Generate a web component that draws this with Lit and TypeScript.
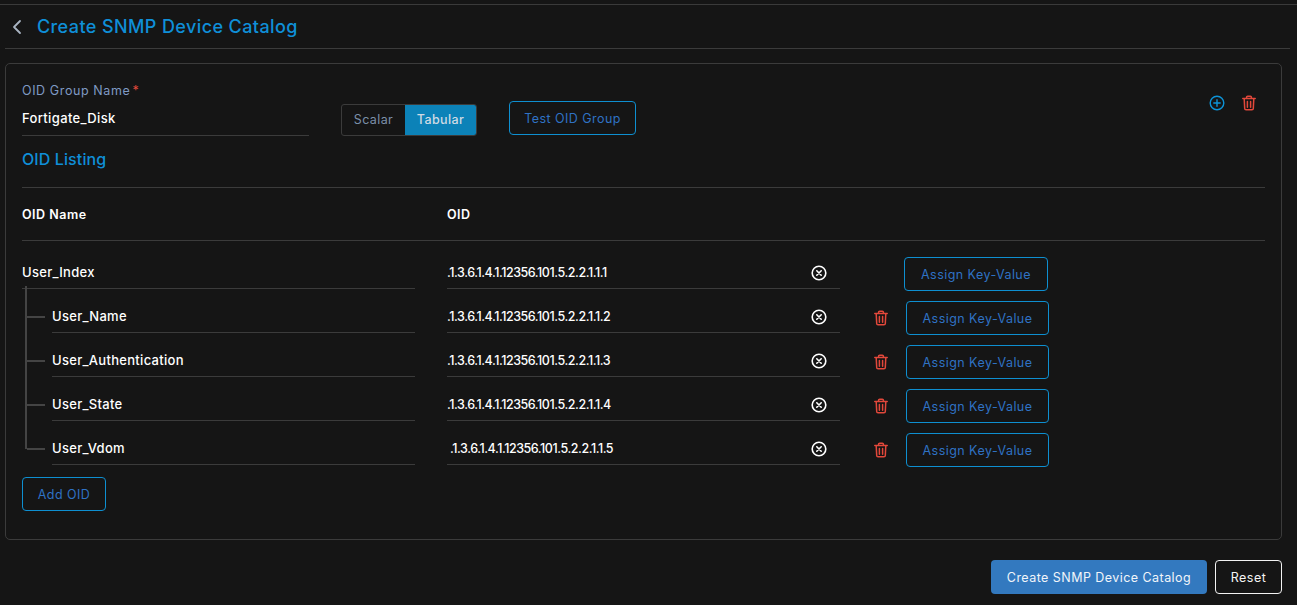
import { LitElement, css, html, svg } from "lit";
import { customElement } from "lit/decorators.js";

const rows = [
  { name: "User_Index", oid: ".1.3.6.1.4.1.12356.101.5.2.2.1.1.1", root: true },
  { name: "User_Name", oid: ".1.3.6.1.4.1.12356.101.5.2.2.1.1.2" },
  { name: "User_Authentication", oid: ".1.3.6.1.4.1.12356.101.5.2.2.1.1.3" },
  { name: "User_State", oid: ".1.3.6.1.4.1.12356.101.5.2.2.1.1.4" },
  { name: "User_Vdom", oid: ".1.3.6.1.4.1.12356.101.5.2.2.1.1.5", shift: true },
];

const trash = html`<svg class="trash" viewBox="0 0 16 16" width="16" height="16" fill="none" stroke="currentColor" stroke-width="1.5" stroke-linejoin="round" stroke-linecap="round">
  ${svg`<path d="M1.8 3.6h12.4M5.6 3.4V2.2c0-.6.4-1 1-1h2.8c.6 0 1 .4 1 1v1.2M3.2 3.8l.5 9.6c0 .8.6 1.4 1.4 1.4h5.8c.8 0 1.4-.6 1.4-1.4l.5-9.6M6.4 6.6v5.6M9.6 6.6v5.6"/>`}
</svg>`;

@customElement("app-root")
export class AppRoot extends LitElement {
  static styles = css`
    :host {
      display: block;
      height: 605px;
      overflow: hidden;
      box-sizing: border-box;
      background: #151515;
      padding-top: 4px;
      font-family: Inter, "Open Sans", sans-serif;
      font-size: 13px;
      color: #fff;
      --line: #3b3b3b;
      --btn-text: #2f72c4;
    }
    .page {
      padding: 0 7px 0 5px;
      border-top: 1px solid #3a3a3a;
    }
    .head {
      display: flex;
      align-items: center;
      gap: 14px;
      height: 43px;
      border-bottom: 1px solid var(--line);
      padding-left: 6px;
    }
    .back {
      color: #a9b4c2;
      display: block;
    }
    h1 {
      margin: 0;
      font-size: 18px;
      font-weight: 500;
      color: #0f8fd8;
      letter-spacing: 0.4px;
    }
    .card {
      position: relative;
      box-sizing: border-box;
      margin-top: 14px;
      margin-right: 8px;
      height: 477px;
      border: 1px solid var(--line);
      border-radius: 5px;
      padding: 18px 16px 16px;
    }
    .group {
      display: flex;
      align-items: flex-start;
    }
    .group-name {
      width: 287px;
      margin-right: 32px;
    }
    .label {
      display: block;
      color: #7f9ac4;
      font-size: 12.5px;
      line-height: 18px;
      letter-spacing: 0.6px;
    }
    .label b {
      color: #e2483b;
      font-weight: 400;
      margin-left: -2px;
    }
    .value {
      height: 36px;
      line-height: 36px;
      border-bottom: 1px solid var(--line);
      box-sizing: border-box;
      letter-spacing: 0.35px;
      font-weight: 500;
    }
    .toggle {
      display: flex;
      margin-top: 22px;
      height: 32px;
      border: 1px solid var(--line);
      border-radius: 3px;
      box-sizing: border-box;
      overflow: hidden;
      font-size: 12.5px;
      letter-spacing: 0.4px;
    }
    .toggle span {
      display: flex;
      align-items: center;
      justify-content: center;
      padding-bottom: 1px;
      box-sizing: border-box;
    }
    .scalar {
      width: 63px;
      color: #7b8fa9;
    }
    .tabular {
      width: 71px;
      background: #0c82b8;
      color: #d0dbe4;
      font-weight: 500;
    }
    button {
      box-sizing: border-box;
      height: 34px;
      padding: 0;
      background: transparent;
      border: 1px solid #0e8fd0;
      border-radius: 4px;
      color: var(--btn-text);
      font: inherit;
      font-size: 12.5px;
      letter-spacing: 0.45px;
    }
    .test {
      width: 127px;
      margin: 19px 0 0 32px;
    }
    .actions {
      position: absolute;
      top: 31px;
      right: 24px;
      display: flex;
      align-items: center;
      gap: 16px;
    }
    .plus {
      color: #0d94d8;
      display: block;
    }
    .trash {
      color: #e2483b;
      display: block;
    }
    h2 {
      margin: 10px 0 0;
      font-size: 16px;
      line-height: 26px;
      font-weight: 500;
      color: #0f8fd8;
      letter-spacing: 0.1px;
    }
    .cols {
      display: grid;
      grid-template-columns: 425px 1fr;
      align-items: center;
      height: 52px;
      margin-top: 15px;
      border-top: 1px solid var(--line);
      border-bottom: 1px solid var(--line);
      font-size: 12.5px;
      font-weight: 600;
      letter-spacing: 0.5px;
    }
    .tree {
      position: relative;
      margin-top: 11px;
    }
    .row {
      display: flex;
      height: 44px;
    }
    .name {
      box-sizing: border-box;
      width: 393px;
      height: 37px;
      line-height: 41px;
      border-bottom: 1px solid var(--line);
      letter-spacing: 0.3px;
      font-weight: 500;
      flex: none;
    }
    .child .name {
      width: 363px;
      margin-left: 30px;
    }
    .oid {
      display: flex;
      align-items: center;
      justify-content: space-between;
      box-sizing: border-box;
      width: 393px;
      height: 37px;
      margin-left: 32px;
      padding: 5px 13px 0 0;
      border-bottom: 1px solid var(--line);
      flex: none;
      font-weight: 500;
      font-size: 12.5px;
      letter-spacing: -0.44px;
    }
    .shift .text {
      margin-left: 3px;
    }
    .clear {
      display: block;
      color: #fff;
    }
    .row-trash {
      flex: none;
      width: 16px;
      margin: 14px 0 0 33px;
    }
    .assign {
      width: 143px;
      margin: 5px 0 0 17px;
      flex: none;
    }
    .root .assign {
      margin: 5px 0 0 64px;
      width: 144px;
    }
    .branch {
      position: absolute;
      left: 3px;
      top: 34px;
      width: 2px;
      height: 163px;
      background: #444;
    }
    .tick {
      position: absolute;
      left: 5px;
      width: 18px;
      height: 2px;
      background: #444;
    }
    .add {
      display: block;
      width: 84px;
      margin-top: 5px;
    }
    .foot {
      display: flex;
      justify-content: flex-end;
      gap: 8px;
      margin: 20px 8px 0 0;
    }
    .primary {
      width: 216px;
      background: #3379bf;
      border: none;
      color: #f1f5fa;
    }
    .reset {
      width: 67px;
      border-color: #f2f2f2;
      color: #f4f4f4;
    }
  `;

  render() {
    return html`
      <div class="page">
        <header class="head">
          <svg class="back" viewBox="0 0 12 16" width="12" height="16" fill="none" stroke="currentColor" stroke-width="1.8" stroke-linecap="round" stroke-linejoin="round"><path d="M9 2 3 8l6 6"/></svg>
          <h1>Create SNMP Device Catalog</h1>
        </header>
        <section class="card">
          <div class="group">
            <div class="group-name">
              <span class="label">OID Group Name <b>*</b></span>
              <div class="value">Fortigate_Disk</div>
            </div>
            <div class="toggle">
              <span class="scalar">Scalar</span>
              <span class="tabular">Tabular</span>
            </div>
            <button class="test">Test OID Group</button>
          </div>
          <div class="actions">
            <svg class="plus" viewBox="0 0 16 16" width="16" height="16" fill="none" stroke="currentColor" stroke-width="1.4" stroke-linecap="round"><circle cx="8" cy="8" r="6.8"/><path d="M8 4.8v6.4M4.8 8h6.4"/></svg>
            ${trash}
          </div>
          <h2>OID Listing</h2>
          <div class="cols">
            <span>OID Name</span>
            <span>OID</span>
          </div>
          <div class="tree">
            <div class="branch"></div>
            ${[0, 1, 2, 3].map(
              (i) => html`<div class="tick" style="top:${64 + i * 44}px"></div>`
            )}
            ${rows.map(
              (r) => html`
                <div class="row ${r.root ? "root" : "child"} ${r.shift ? "shift" : ""}">
                  <div class="name">${r.name}</div>
                  <div class="oid">
                    <span class="text">${r.oid}</span>
                    <svg class="clear" viewBox="0 0 16 16" width="16" height="16" fill="none" stroke="currentColor" stroke-width="1.6" stroke-linecap="round"><circle cx="8" cy="8" r="6.8"/><path d="M5.8 5.8l4.4 4.4M10.2 5.8l-4.4 4.4"/></svg>
                  </div>
                  ${r.root ? "" : html`<div class="row-trash">${trash}</div>`}
                  <button class="assign">Assign Key-Value</button>
                </div>
              `
            )}
          </div>
          <button class="add">Add OID</button>
        </section>
        <footer class="foot">
          <button class="primary">Create SNMP Device Catalog</button>
          <button class="reset">Reset</button>
        </footer>
      </div>
    `;
  }
}
